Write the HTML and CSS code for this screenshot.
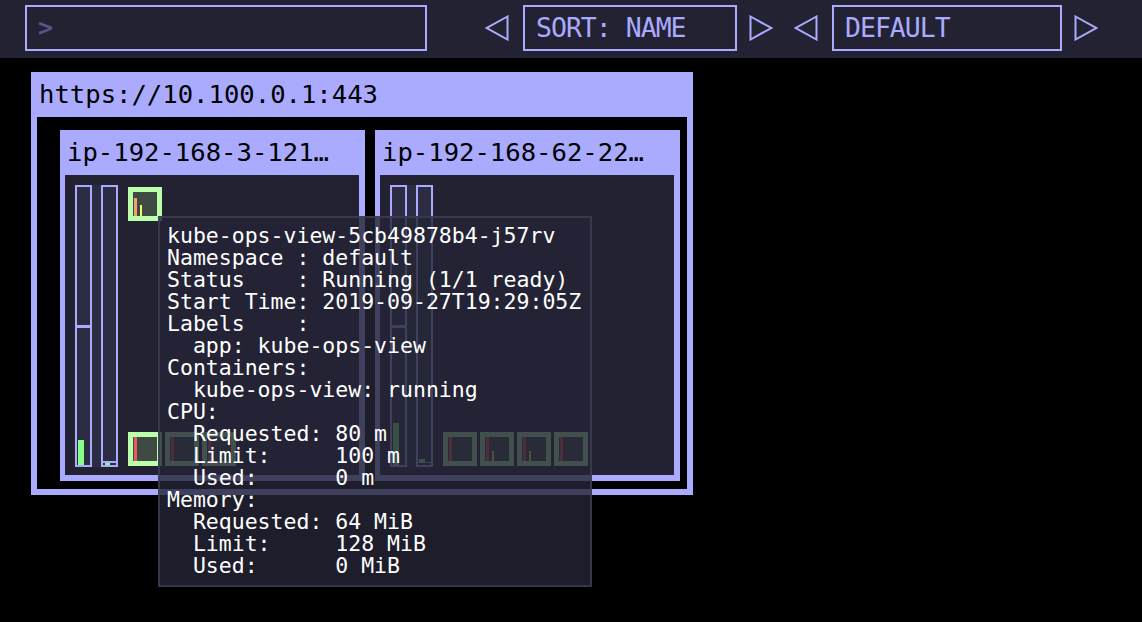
FILE: index.html
```html
<!DOCTYPE html>
<html>
<head>
<meta charset="utf-8">
<title>Kubernetes Operational View</title>
<link rel="stylesheet" href="styles.css">
</head>
<body>
<header class="topbar">
  <div class="search"><span class="prompt">&gt;</span></div>
  <div class="picker picker-sort">
    <svg class="tri" viewBox="0 0 24 26"><polygon points="22.5,1.5 1.8,13 22.5,24.5"/></svg>
    <div class="select sort">SORT: NAME</div>
    <svg class="tri" viewBox="0 0 24 26"><polygon points="1.5,1.5 22.2,13 1.5,24.5"/></svg>
  </div>
  <div class="picker picker-ns">
    <svg class="tri" viewBox="0 0 24 26"><polygon points="22.5,1.5 1.8,13 22.5,24.5"/></svg>
    <div class="select ns">DEFAULT</div>
    <svg class="tri" viewBox="0 0 24 26"><polygon points="1.5,1.5 22.2,13 1.5,24.5"/></svg>
  </div>
</header>

<section class="cluster">
  <div class="cluster-title">https://10.100.0.1:443</div>
  <div class="cluster-body">
    <div class="node">
      <div class="node-title">ip-192-168-3-121…</div>
      <div class="node-body">
        <div class="bars">
          <div class="bar">
            <div class="bar-req" style="top:138px"></div>
            <div class="bar-use" style="height:25px"></div>
          </div>
          <div class="bar">
            <div class="bar-req" style="top:274px;height:2px"></div>
            <div class="bar-use" style="height:2px;width:5px;left:2px"></div>
          </div>
        </div>
        <div class="pods">
          <div class="pod-row">
            <div class="pod"><span class="cpu" style="height:18px"></span><span class="mem" style="height:11px"></span></div>
          </div>
          <div class="pod-row">
            <div class="pod"><span class="cpu red" style="height:24px"></span></div>
            <div class="pod"><span class="cpu red" style="height:24px"></span></div>
            <div class="pod"><span class="cpu red" style="height:24px"></span></div>
          </div>
        </div>
      </div>
    </div>
    <div class="node">
      <div class="node-title">ip-192-168-62-22…</div>
      <div class="node-body">
        <div class="bars">
          <div class="bar">
            <div class="bar-req" style="top:138px"></div>
            <div class="bar-use" style="height:42px"></div>
          </div>
          <div class="bar">
            <div class="bar-req" style="top:275px;height:1px"></div>
            <div class="bar-use" style="height:4px;bottom:2px;width:6px"></div>
          </div>
        </div>
        <div class="pods">
          <div class="pod-row"></div>
          <div class="pod-row">
            <div class="pod"><span class="cpu red" style="height:24px"></span></div>
            <div class="pod"><span class="cpu red" style="height:24px"></span><span class="mem" style="height:10px"></span></div>
            <div class="pod"><span class="cpu red" style="height:24px"></span><span class="mem" style="height:10px"></span></div>
            <div class="pod"><span class="cpu red" style="height:24px"></span></div>
          </div>
        </div>
      </div>
    </div>
  </div>
</section>

<pre class="tooltip">kube-ops-view-5cb49878b4-j57rv
Namespace : default
Status    : Running (1/1 ready)
Start Time: 2019-09-27T19:29:05Z
Labels    :
  app: kube-ops-view
Containers:
  kube-ops-view: running
CPU:
  Requested: 80 m
  Limit:     100 m
  Used:      0 m
Memory:
  Requested: 64 MiB
  Limit:     128 MiB
  Used:      0 MiB</pre>
</body>
</html>
```
FILE: styles.css
```css
* { box-sizing: border-box; }

body {
  margin: 0;
  background: #000;
  font-family: "DejaVu Sans Mono", monospace;
  width: 1142px;
  height: 622px;
  overflow: hidden;
  position: relative;
}

.topbar {
  height: 58px;
  background: #222233;
  display: flex;
  align-items: center;
  padding: 5px 0 7px 25px;
}

.search {
  width: 402px;
  height: 46px;
  border: 2px solid #aaaaff;
  padding-left: 11px;
  line-height: 42px;
}

.prompt {
  color: #555588;
  font-size: 25px;
  font-weight: bold;
}

.picker {
  display: flex;
  align-items: center;
}

.picker-sort { margin-left: 58px; }
.picker-ns { margin-left: 21px; }

.tri {
  width: 24px;
  height: 26px;
  flex: none;
}

.tri polygon {
  fill: none;
  stroke: #aaaaff;
  stroke-width: 2;
}

.select {
  height: 46px;
  margin: 0 12px 0 14px;
  border: 2px solid #aaaaff;
  color: #aaaaff;
  font-size: 26.5px;
  letter-spacing: -1px;
  line-height: 42px;
  padding-left: 11px;
  white-space: nowrap;
}

.sort { width: 214px; }
.ns { width: 230px; }

.cluster {
  margin: 14px 0 0 31px;
  width: 662px;
  background: #aaaaff;
  padding: 0 6px 6px;
}

.cluster-title {
  height: 45px;
  line-height: 45px;
  font-size: 25.6px;
  color: #000;
  padding-left: 2px;
  white-space: nowrap;
}

.cluster-body {
  background: #000;
  display: flex;
  gap: 10px;
  padding: 13px 0 8px 23px;
}

.node {
  width: 305px;
  background: #aaaaff;
  padding: 0 6px 6px 5px;
}

.node-title {
  height: 45px;
  line-height: 45px;
  font-size: 25.6px;
  color: #000;
  padding-left: 2px;
  white-space: nowrap;
  overflow: hidden;
}

.node-body {
  height: 300px;
  background: #222233;
  display: flex;
  padding: 10px 0 0 10px;
}

.bars {
  display: flex;
  gap: 9px;
  height: 282px;
  background: #2c2d43;
  flex: none;
}

.bar {
  width: 17px;
  height: 282px;
  border: 2px solid #aaaaff;
  position: relative;
  background: #2c2d43;
}

.bar-req {
  position: absolute;
  left: 0;
  right: 0;
  height: 3px;
  background: #aaaaff;
}

.bar-use {
  position: absolute;
  bottom: 0;
  left: 1px;
  width: 6px;
  background: #88ff88;
}

.pods {
  margin: 2px 0 0 10px;
  height: 279px;
  display: flex;
  flex-direction: column;
  justify-content: space-between;
}

.pod-row {
  display: flex;
  gap: 3px;
  height: 34px;
}

.pod {
  width: 34px;
  height: 34px;
  border: 5px solid #bbffaa;
  background: #3f4a44;
  display: flex;
  align-items: flex-end;
  gap: 3px;
  padding-left: 1px;
}

.cpu {
  width: 3px;
  background: #f5a070;
}

.cpu.red { background: #e85a5a; }

.mem {
  width: 2px;
  background: #eeff66;
}

.tooltip {
  position: absolute;
  left: 158px;
  top: 216px;
  width: 434px;
  height: 371px;
  margin: 0;
  background: rgba(36, 36, 54, 0.8);
  border: 2px solid rgba(62, 62, 84, 0.8);
  padding: 7px 0 0 7px;
  color: #ffffff;
  font-family: "DejaVu Sans Mono", monospace;
  font-size: 21.5px;
  line-height: 22px;
  white-space: pre;
}
```
